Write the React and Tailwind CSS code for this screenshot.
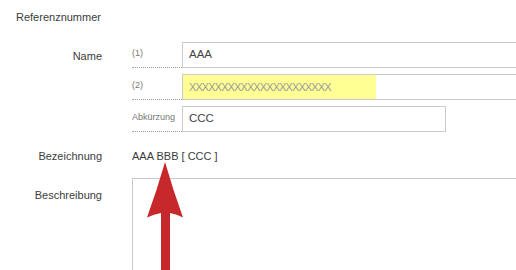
const subRows = [
  { key: "(1)", value: "AAA", width: "w-[360px]" },
  { key: "(2)", value: "XXXXXXXXXXXXXXXXXXXXXX", width: "w-[360px]", highlight: true },
  { key: "Abkürzung", value: "CCC", width: "w-[264px]" },
];

function Arrow() {
  return (
    <svg className="absolute left-0 top-0" width="516" height="270" viewBox="0 0 516 270">
      <path
        d="M165 162 Q157 190 147 217.5 Q154 214 161 213 L161 270 L170 270 L170 213 Q177 214 183 217.5 Q173 190 165 162 Z"
        fill="#c7282b"
      />
    </svg>
  );
}

export default function App() {
  return (
    <div
      className="relative h-[270px] w-[516px] overflow-hidden bg-white text-[11px] text-[#3c3c3c]"
      style={{ fontFamily: '"Liberation Sans", Arial, sans-serif' }}
    >
      <div className="pl-4 pt-[11px] leading-[12px]">Referenznummer</div>

      <div className="mt-[19px] flex">
        <div className="w-[102px] shrink-0 pt-[8px] text-right leading-[12px]">Name</div>
        <div className="ml-[30px] flex shrink-0 flex-col gap-[6px]">
          {subRows.map((row) => (
            <div key={row.key} className="flex h-[26px]">
              <div className="flex w-[50px] shrink-0 items-center border-b border-dotted border-[#9a9a9a] pb-[2px] text-[9px] text-[#777]">
                {row.key}
              </div>
              <div className={`flex h-[26px] shrink-0 ${row.width} border border-[#cacaca]`}>
                {row.highlight ? (
                  <div className="flex h-full w-[193px] items-center bg-[#ffff94] pl-[6px] text-[#9a9a9a] tracking-[-0.9px]">
                    {row.value}
                  </div>
                ) : (
                  <div className="flex h-full items-center pl-[6px] text-[11.5px] text-[#444]">{row.value}</div>
                )}
              </div>
            </div>
          ))}
        </div>
      </div>

      <div className="mt-[18px] flex leading-[12px]">
        <div className="w-[102px] shrink-0 text-right">Bezeichnung</div>
        <div className="ml-[30px] shrink-0 text-[#3c3c3c]">AAA BBB [ CCC ]</div>
      </div>

      <div className="mt-[16px] flex">
        <div className="w-[102px] shrink-0 pt-[11px] text-right leading-[12px]">Beschreibung</div>
        <div className="ml-[30px] h-[120px] w-[400px] shrink-0 border border-[#cacaca]"></div>
      </div>

      <Arrow />
    </div>
  );
}
